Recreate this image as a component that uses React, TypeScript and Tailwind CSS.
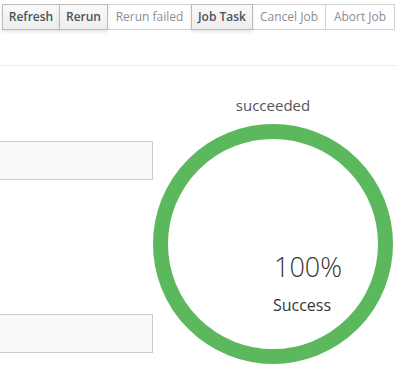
import React from "react";

type Btn = { label: string; width: string; enabled: boolean };

const buttons: Btn[] = [
  { label: "Refresh", width: "w-[58px]", enabled: true },
  { label: "Rerun", width: "w-[49px]", enabled: true },
  { label: "Rerun failed", width: "w-[85px]", enabled: false },
  { label: "Job Task", width: "w-[62px]", enabled: true },
  { label: "Cancel Job", width: "w-[74px]", enabled: false },
  { label: "Abort Job", width: "w-[70px]", enabled: false },
];

function Toolbar() {
  return (
    <div className="flex pl-[2px] pt-[4px]">
      {buttons.map((b, i) => (
        <button
          key={b.label}
          className={
            b.width +
            " h-[26px] text-[12px] leading-[24px] text-center whitespace-nowrap border " +
            (i > 0 ? "-ml-px " : "") +
            (b.enabled
              ? "relative z-10 font-semibold text-[#4d5258] border-[#bbb] bg-linear-to-b from-[#fafafa] to-[#ededed] shadow-[0_2px_3px_rgba(3,3,3,0.1)]"
              : "font-normal text-[#8b8d8f] border-[#d1d1d1] bg-white")
          }
        >
          {b.label}
        </button>
      ))}
    </div>
  );
}

function Field() {
  return (
    <div className="-ml-[10px] h-[39px] border border-[#ccc] bg-[#fafafa]" />
  );
}

function Donut() {
  const r = 112.5;
  return (
    <div className="relative w-[240px] h-[240px]">
      <svg width="240" height="240" viewBox="0 0 240 240">
        <circle cx="120" cy="120" r={r} fill="none" stroke="#5cb85c" strokeWidth="15" />
      </svg>
      <div className="absolute left-0 top-[129px] w-[310px] text-center text-[27px] leading-[27px] font-light text-[#363636]">
        100%
      </div>
      <div className="absolute left-0 top-[173px] w-[298px] text-center text-[16px] leading-[16px] text-[#363636]">
        Success
      </div>
    </div>
  );
}

export default function App() {
  return (
    <div
      className="w-[398px] h-[366px] overflow-hidden bg-white"
      style={{ fontFamily: '"Open Sans", "Noto Sans", sans-serif' }}
    >
      <Toolbar />
      <div className="mt-[35px] border-t border-[#ededed]" />
      <div className="flex">
        <div className="w-[153px] overflow-hidden pt-[75px]">
          <Field />
          <div className="mt-[134px]">
            <Field />
          </div>
        </div>
        <div className="w-[240px] pt-[29px]">
          <div className="text-center text-[15px] leading-[20px] text-[#555]">succeeded</div>
          <div className="mt-[9px]">
            <Donut />
          </div>
        </div>
      </div>
    </div>
  );
}
